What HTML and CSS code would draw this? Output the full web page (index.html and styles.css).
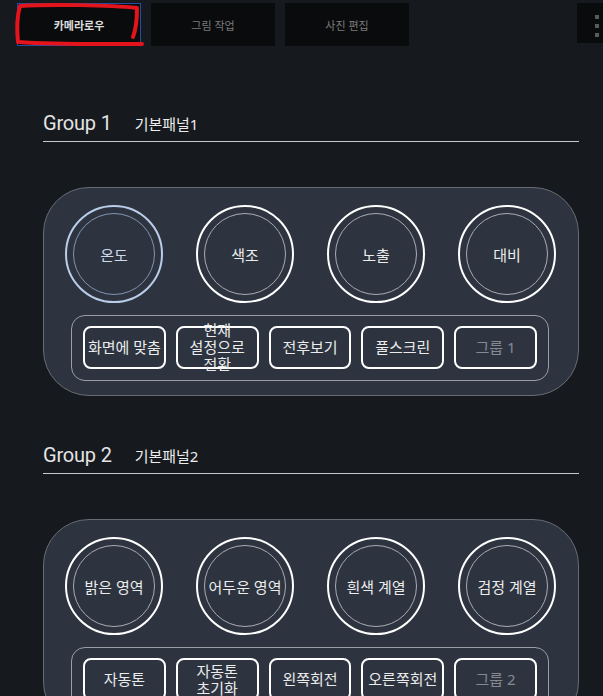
FILE: index.html
```html
<!DOCTYPE html>
<html lang="ko">
<head>
<meta charset="utf-8">
<title>Panels</title>
<link rel="stylesheet" href="styles.css">
</head>
<body>
<nav class="tabs">
  <div class="tab tab-active">카메라로우</div>
  <div class="tab">그림 작업</div>
  <div class="tab">사진 편집</div>
  <div class="tab-menu"><span class="dot"></span><span class="dot"></span><span class="dot"></span></div>
  <svg class="scribble" width="160" height="55" viewBox="0 0 160 55"><path d="M133 37 C136 29 137 18 137 8 C110 5 50 4 20 6 C17 16 17 32 18 42 C60 45 110 44 142 44" fill="none" stroke="#e3141b" stroke-width="4" stroke-linecap="round" stroke-linejoin="round"/></svg>
</nav>

<section class="group group-first">
  <header class="group-head"><span class="group-title">Group 1</span><span class="group-sub">기본패널1</span></header>
  <div class="panel">
    <div class="dials">
      <div class="dial dial-active"><span>온도</span></div>
      <div class="dial"><span>색조</span></div>
      <div class="dial"><span>노출</span></div>
      <div class="dial"><span>대비</span></div>
    </div>
    <div class="btn-row">
      <div class="btn">화면에 맞춤</div>
      <div class="btn">현재 설정으로 전환</div>
      <div class="btn">전후보기</div>
      <div class="btn">풀스크린</div>
      <div class="btn btn-muted">그룹 1</div>
    </div>
  </div>
</section>

<section class="group">
  <header class="group-head"><span class="group-title">Group 2</span><span class="group-sub">기본패널2</span></header>
  <div class="panel">
    <div class="dials">
      <div class="dial"><span>밝은 영역</span></div>
      <div class="dial"><span>어두운 영역</span></div>
      <div class="dial"><span>흰색 계열</span></div>
      <div class="dial"><span>검정 계열</span></div>
    </div>
    <div class="btn-row">
      <div class="btn">자동톤</div>
      <div class="btn">자동톤 초기화</div>
      <div class="btn">왼쪽회전</div>
      <div class="btn">오른쪽회전</div>
      <div class="btn btn-muted">그룹 2</div>
    </div>
  </div>
</section>
</body>
</html>
```

FILE: styles.css
```css
html, body {
  margin: 0;
  padding: 0;
  overflow: hidden;
  background: #16191e;
  font-family: "Noto Sans", "Noto Sans CJK KR", sans-serif;
  color: #e6e6e6;
}

.tabs {
  position: relative;
  display: flex;
  align-items: flex-start;
  gap: 10px;
  padding: 3px 0 0 17px;
  height: 43px;
}

.tab {
  box-sizing: border-box;
  width: 124px;
  height: 43px;
  background: #0a0b0d;
  color: #7c7c7c;
  font-size: 11px;
  display: flex;
  align-items: center;
  justify-content: center;
}

.tab-active {
  border: 1px solid #1e4ea6;
  color: #dcdcdc;
  font-weight: 700;
}

.tab-menu {
  margin-left: auto;
  width: 26px;
  height: 40px;
  background: #0a0b0d;
  display: flex;
  flex-direction: column;
  align-items: flex-end;
  gap: 5px;
  padding: 12px 4px 0 0;
  box-sizing: border-box;
}

.dot {
  width: 4px;
  height: 4px;
  background: #5a5a5a;
}

.scribble {
  position: absolute;
  left: 0;
  top: 0;
}

.group {
  margin: 47px 24px 0 43px;
}

.group-first {
  margin-top: 65px;
}

.group-head {
  display: flex;
  align-items: baseline;
  gap: 23px;
  padding-bottom: 6px;
  border-bottom: 1px solid #c9c9c9;
}

.group-title {
  font-family: Roboto, "Noto Sans", sans-serif;
  font-size: 20px;
  line-height: 24px;
  letter-spacing: -0.2px;
  color: #e4e4e4;
}

.group-sub {
  font-size: 15px;
  color: #ececec;
}

.panel {
  margin-top: 45px;
  border: 1px solid #676c73;
  border-radius: 46px;
  background: #2d3440;
  padding: 17px 0 14px;
}

.dials {
  display: flex;
  gap: 33px;
  padding-left: 21px;
}

.dial {
  position: relative;
  box-sizing: border-box;
  width: 98px;
  height: 98px;
  border: 2px solid #ffffff;
  border-radius: 50%;
  display: flex;
  align-items: center;
  justify-content: center;
  font-size: 15px;
  color: #ececec;
}

.dial::before {
  content: "";
  position: absolute;
  inset: 6px;
  border: 1px solid #a9adb3;
  border-radius: 50%;
}

.dial span {
  position: relative;
  white-space: nowrap;
}

.dial-active {
  border-color: #b9cce9;
  color: #cfd9ea;
}

.dial-active::before {
  border-color: #8294b2;
}

.btn-row {
  margin: 12px 29px 0 27px;
  border: 1px solid #9a9ea5;
  border-radius: 14px;
  padding: 10px 11px 11px;
  display: flex;
  gap: 10px;
}

.btn {
  box-sizing: border-box;
  width: 83px;
  height: 43px;
  border: 2px solid #ffffff;
  border-radius: 8px;
  display: flex;
  align-items: center;
  justify-content: center;
  text-align: center;
  font-size: 15px;
  line-height: 17px;
  word-break: keep-all;
  color: #ececec;
  padding: 0 1px;
}

.btn-muted {
  color: #858a92;
}
```
